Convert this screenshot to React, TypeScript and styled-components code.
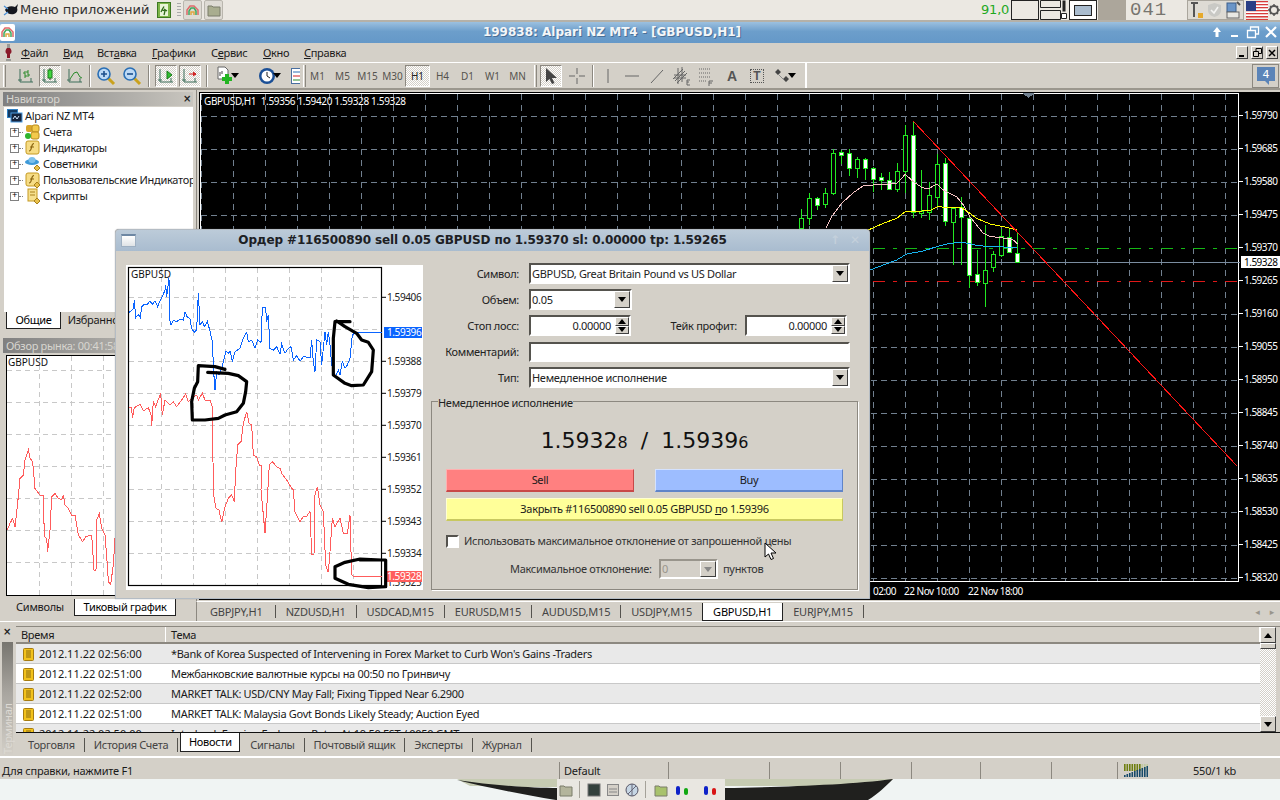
import React from "react";
import styled, { createGlobalStyle, css } from "styled-components";

const ui = `"Noto Sans", "DejaVu Sans", sans-serif`;

const GlobalStyle = createGlobalStyle`
  html, body { margin: 0; padding: 0; background: #d4d0c8; }
  * { box-sizing: border-box; }
  u { text-underline-offset: 1px; }
`;

/* ---------- shared looks ---------- */
const sunken = css`
  border: 2px solid;
  border-color: #55534e #fff #fff #55534e;
  background: #fff;
`;
const raised = css`
  border: 1px solid;
  border-color: #fff #404040 #404040 #fff;
  background: #d4d0c8;
`;

const Desktop = styled.div`
  position: relative;
  width: 1280px;
  height: 800px;
  overflow: hidden;
  display: flex;
  flex-direction: column;
  font: 11px/14px ${ui};
  letter-spacing: -0.3px;
  color: #1a1a1a;
  background: #d4d0c8;
`;

/* ---------- top panel ---------- */
const TopPanel = styled.div`
  height: 22px;
  flex: none;
  display: flex;
  align-items: center;
  background: #ebe8e2;
  border-bottom: 2px solid #b5b1a8;
  padding-left: 3px;
`;
const AppMenu = styled.span`
  font: 13px/20px "DejaVu Sans", sans-serif;
  letter-spacing: 0;
  margin-left: 1px;
  width: 137px;
  flex: none;
  white-space: nowrap;
  color: #333;
`;
const PanelTile = styled.span<{ $ml?: number }>`
  width: 19px;
  height: 20px;
  margin-left: ${p => p.$ml ?? 0}px;
  display: flex;
  align-items: center;
  justify-content: center;
  border: 1px solid #b9b6ae;
  border-radius: 2px;
  background: #dedbd4;
`;
const Grip = styled.span`
  width: 4px;
  height: 14px;
  margin: 0 2px 0 6px;
  background: repeating-linear-gradient(#aaa 0 1px, transparent 1px 3px);
`;
const PanelRight = styled.div`
  margin-left: auto;
  display: flex;
  align-items: center;
  height: 20px;
`;
const CpuText = styled.span`
  font: 13px/20px "DejaVu Sans", sans-serif;
  color: #1fa81f;
  letter-spacing: -0.2px;
  width: 30px;
  flex: none;
  white-space: nowrap;
`;
const Pager = styled.span<{ $active?: boolean; $fill?: boolean; $plain?: boolean }>`
  width: 28px;
  height: 20px;
  margin-right: 1px;
  flex: none;
  border: ${p => (p.$plain ? "0" : "1px solid #222")};
  background: ${p => (p.$fill ? "#aca69b" : p.$active ? "#fff" : "#ebe8e2")};
  ${p => p.$fill && "border-color:#aca69b;"}
  display: flex;
  align-items: center;
  justify-content: center;
`;
const ClockDigits = styled.span`
  font: 19px/20px "Liberation Mono", monospace;
  color: #77756f;
  width: 38px;
  margin-left: 3px;
  letter-spacing: 1px;
  flex: none;
`;
const Tray = styled.span`
  width: 57px;
  height: 20px;
  margin: 0 2px 0 19px;
  display: flex;
  align-items: center;
  gap: 3px;
  padding-left: 2px;
  border: 1px solid #aaa69d;
  background: #dedbd4;
`;

/* ---------- main window title ---------- */
const TitleBar = styled.div`
  height: 21px;
  flex: none;
  display: flex;
  align-items: center;
  justify-content: center;
  position: relative;
  padding-right: 56px;
  background: linear-gradient(#9cc0df, #6c9ecb 45%, #6598c8);
  color: #f4f6f8;
  font: bold 12px/21px "DejaVu Sans", sans-serif;
  letter-spacing: 0;
  text-shadow: 1px 1px 0 #4a6f96;
`;
const TitleIcon = styled.span`
  position: absolute;
  left: 0;
  top: 2px;
  width: 15px;
  height: 17px;
  background: #fff;
  border-radius: 2px;
  display: flex;
  align-items: center;
  justify-content: center;
`;
const TitleButtons = styled.span`
  position: absolute;
  right: 2px;
  top: 3px;
  display: flex;
  gap: 4px;
`;

/* ---------- menu ---------- */
const MenuBar = styled.div`
  height: 20px;
  flex: none;
  display: flex;
  align-items: center;
  padding-left: 2px;
  background: #d4d0c8;
  border-bottom: 1px solid #fff;
`;
const MenuItem = styled.span<{ $w: number }>`
  width: ${p => p.$w}px;
  flex: none;
`;
const MenuIcon = styled.svg`
  flex: none;
  margin-right: 2px;
`;
const MdiButtons = styled.span`
  margin-left: auto;
  margin-right: 2px;
  display: flex;
  gap: 3px;
`;
const MdiButton = styled.span`
  ${raised}
  width: 12px;
  height: 13px;
  display: flex;
  align-items: center;
  justify-content: center;
`;

/* ---------- tool bar ---------- */
const ToolBar = styled.div`
  height: 27px;
  flex: none;
  display: flex;
  align-items: center;
  background: #d4d0c8;
  border-bottom: 2px solid #9b978e;
  padding-left: 3px;
  position: relative;
  letter-spacing: 0;
`;
const ToolGrip = styled.span<{ $ml?: number }>`
  width: 3px;
  height: 22px;
  margin-left: ${p => p.$ml ?? 0}px;
  border-left: 1px solid #fff;
  border-right: 1px solid #8c8880;
`;
const ToolSep = styled.span<{ $ml: number }>`
  width: 2px;
  height: 22px;
  margin-left: ${p => p.$ml}px;
  border-left: 1px solid #8c8880;
  border-right: 1px solid #fff;
`;
const Tool = styled.span<{ $ml?: number; $w?: number; $on?: boolean }>`
  width: ${p => p.$w ?? 22}px;
  height: 22px;
  margin-left: ${p => p.$ml ?? 0}px;
  flex: none;
  display: flex;
  align-items: center;
  justify-content: center;
  color: #55534e;
  font-size: 10px;
  ${p =>
    p.$on &&
    css`
      background: repeating-conic-gradient(#fff 0 25%, #d4d0c8 0 50%) 0 0 / 2px 2px;
      border: 1px solid;
      border-color: #8c8880 #fff #fff #8c8880;
      color: #222;
    `}
`;
const ToolEnd = styled.span<{ $ml: number }>`
  width: 2px;
  height: 25px;
  margin-left: ${p => p.$ml}px;
  background: #fff;
`;
const NewsBadge = styled.span`
  position: absolute;
  right: 1px;
  top: 1px;
  width: 27px;
  height: 24px;
  border: 1px solid #8c8880;
  display: flex;
  align-items: center;
  justify-content: center;
`;

/* ---------- workspace ---------- */
const Workspace = styled.div`
  height: 531px;
  flex: none;
  display: flex;
`;
const LeftDock = styled.div`
  width: 197px;
  flex: none;
  display: flex;
  flex-direction: column;
  padding: 2px 0 0 3px;
  border-right: 1px solid #8c8880;
`;
const DockHeader = styled.div`
  height: 14px;
  margin-right: 3px;
  display: flex;
  align-items: center;
  justify-content: space-between;
  padding: 0 2px 0 3px;
  background: linear-gradient(90deg, #808080, #c9c6bf);
  color: #d8d6d0;
  font-size: 11px;
  white-space: nowrap;
`;
const Close = styled.span`
  font: bold 10px/12px "DejaVu Sans", sans-serif;
  color: #222;
`;
const Tree = styled.div`
  height: 205px;
  flex: none;
  margin: 1px 3px 0 1px;
  padding-top: 1px;
  background: #fff;
  overflow: hidden;
`;
const TreeRow = styled.div<{ $root?: boolean }>`
  height: 16px;
  display: flex;
  align-items: center;
  white-space: nowrap;
  padding-left: ${p => (p.$root ? 3 : 6)}px;
`;
const PlusBox = styled.span`
  width: 9px;
  height: 9px;
  flex: none;
  border: 1px solid #808080;
  font: 9px/7px "Liberation Mono", monospace;
  text-align: center;
  color: #000;
`;
const Dots = styled.span`
  width: 4px;
  border-top: 1px dotted #808080;
  flex: none;
`;
const TreeGlyph = styled.svg`
  flex: none;
  margin-left: 2px;
`;
const TreeText = styled.span`
  margin-left: 2px;
`;
const DockTabs = styled.div<{ $h: number }>`
  height: ${p => p.$h}px;
  flex: none;
  display: flex;
  padding-left: 3px;
  align-items: flex-start;
`;
const DockTab = styled.span<{ $w: number; $on?: boolean }>`
  width: ${p => p.$w}px;
  height: 17px;
  flex: none;
  text-align: center;
  line-height: 16px;
  white-space: nowrap;
  ${p =>
    p.$on &&
    css`
      background: #fff;
      border: 1px solid #222;
      border-top: 0;
      color: #000;
    `}
`;
const MarketHeader = styled(DockHeader)`
  margin-top: 6px;
  height: 15px;
  flex: none;
`;
const TickBox = styled.div`
  height: 243px;
  flex: none;
  margin: 1px 0 2px 3px;
  background: #d4d0c8;
  overflow: hidden;
`;
const ChartSvg = styled.svg`
  display: block;
  font-family: ${ui};
`;

const ChartColumn = styled.div`
  flex: 1;
  display: flex;
  flex-direction: column;
  padding: 2px 0 0 2px;
  min-width: 0;
`;
const ChartTabs = styled.div`
  height: 20px;
  margin: 1px 0 0 -3px;
  flex: none;
  display: flex;
  align-items: center;
  border-left: 1px solid #8c8880;
  border-top: 1px solid #fff;
  color: #444;
  letter-spacing: -0.2px;
  padding-left: 3px;
`;
const ChartTab = styled.span<{ $on?: boolean }>`
  height: 13px;
  line-height: 13px;
  padding: 0 10px;
  border-right: 1px solid #55534e;
  white-space: nowrap;
  &:first-child {
    padding-right: 12px;
  }
  ${p =>
    p.$on &&
    css`
      height: 18px;
      line-height: 17px;
      margin-left: -1px;
      background: #fff;
      color: #000;
      border: 1px solid #222;
      border-top: 0;
    `}
`;
const TabScroll = styled.span`
  margin-left: auto;
  margin-right: 6px;
  color: #99958c;
  font-size: 9px;
  word-spacing: 8px;
`;

/* ---------- terminal ---------- */
const Terminal = styled.div`
  height: 137px;
  flex: none;
  display: flex;
  border-top: 1px solid #fff;
  border-bottom: 2px solid #fff;
  padding-top: 4px;
`;
const TerminalStrip = styled.div`
  width: 16px;
  flex: none;
  display: flex;
  flex-direction: column;
  align-items: center;
  padding-right: 2px;
`;
const VerticalHead = styled.div`
  flex: 1;
  width: 11px;
  margin-top: 4px;
  background: linear-gradient(#d4d0c8, #a9a6a0 55%, #77756f);
  color: #dddad4;
  writing-mode: vertical-rl;
  transform: rotate(180deg);
  line-height: 11px;
  font-size: 11px;
  padding-top: 2px;
  white-space: nowrap;
`;
const TerminalMain = styled.div`
  flex: 1;
  display: flex;
  flex-direction: column;
  min-width: 0;
`;
const ListArea = styled.div`
  height: 107px;
  display: flex;
  border-bottom: 1px solid #111;
  border-top: 1px solid #8c8880;
  flex: none;
`;
const ListCols = styled.div`
  flex: 1;
  overflow: hidden;
`;
const ListHead = styled.div`
  display: flex;
  height: 17px;
  background: #d4d0c8;
  border-bottom: 2px solid #8c8880;
`;
const HeadCell = styled.span<{ $w?: number }>`
  ${p => (p.$w ? `width:${p.$w}px;` : "flex:1;")}
  padding-left: 5px;
  line-height: 15px;
  border-right: 1px solid #fff;
`;
const NewsRow = styled.div<{ $alt?: boolean }>`
  display: flex;
  height: 20px;
  align-items: center;
  padding-top: 1px;
  background: ${p => (p.$alt ? "#e9e9e9" : "#fff")};
  border-bottom: 1px solid #c8c8c8;
  white-space: nowrap;
`;
const NewsTime = styled.span`
  width: 150px;
  flex: none;
  display: flex;
  align-items: center;
  gap: 5px;
  padding-left: 7px;
  letter-spacing: 0;
`;
const NewsSubject = styled.span`
  padding-left: 5px;
`;
const NewsGlyph = styled.svg`
  flex: none;
`;
const ScrollBar = styled.div`
  width: 16px;
  margin-right: 4px;
  flex: none;
  display: flex;
  flex-direction: column;
  background: repeating-conic-gradient(#fff 0 25%, #d4d0c8 0 50%) 0 0 / 2px 2px;
`;
const ScrollBtn = styled.span<{ $h?: number }>`
  ${raised}
  height: ${p => p.$h ?? 16}px;
  flex: none;
  display: flex;
  align-items: center;
  justify-content: center;
`;
const ScrollGap = styled.span`
  flex: 1;
`;
const TermTabs = styled.div`
  height: 21px;
  display: flex;
  align-items: flex-start;
  padding: 3px 0 0 12px;
  color: #444;
`;
const TermTab = styled.span<{ $on?: boolean }>`
  height: 14px;
  line-height: 14px;
  padding: 0 9px 0 0;
  margin-right: 9px;
  margin-top: 2px;
  border-right: 1px solid #55534e;
  white-space: nowrap;
  ${p =>
    p.$on &&
    css`
      margin: -3px 10px 0 -7px;
      padding: 0;
      width: 60px;
      text-align: center;
      height: 19px;
      line-height: 17px;
      background: #fff;
      color: #000;
      border: 1px solid #222;
      border-top: 0;
    `}
`;

/* ---------- status bar ---------- */
const StatusBar = styled.div`
  height: 21px;
  flex: none;
  display: flex;
  align-items: flex-end;
  letter-spacing: -0.2px;
`;
const StatusCell = styled.span<{ $w: number; $pad?: number }>`
  width: ${p => p.$w}px;
  height: 17px;
  flex: none;
  line-height: 17px;
  padding-left: ${p => p.$pad ?? 4}px;
  border-right: 1px solid #8c8880;
  display: flex;
  align-items: center;
  gap: 45px;
  white-space: nowrap;
`;
const StatusPlain = styled(StatusCell)`
  border-right: 0;
`;

/* ---------- wallpaper + dock ---------- */
const Wallpaper = styled.div`
  height: 21px;
  flex: none;
  position: relative;
  background: #f0f4f3;
  padding-left: 557px;
`;
const WallArt = styled.svg`
  position: absolute;
  left: 0;
  top: 0;
`;
const Dock = styled.div`
  position: relative;
  width: 168px;
  height: 21px;
  display: flex;
  align-items: center;
  background: #e9e7e1;
`;
const DockIcon = styled.span<{ $ml: number }>`
  margin-left: ${p => p.$ml}px;
  display: flex;
`;
const DockSep = styled.span<{ $ml: number }>`
  width: 1px;
  height: 17px;
  margin-left: ${p => p.$ml}px;
  background: #a5a299;
`;

/* ---------- order dialog ---------- */
const Dialog = styled.div`
  position: absolute;
  left: 115px;
  top: 229px;
  width: 755px;
  height: 370px;
  background: #d4d0c8;
  border: 1px solid #b4bcc4;
  border-radius: 4px 4px 0 0;
  box-shadow: 0 0 1px #777;
`;
const DialogTitle = styled.div`
  height: 21px;
  position: relative;
  display: flex;
  align-items: center;
  justify-content: center;
  padding-right: 20px;
  background: linear-gradient(#bccbd9, #a9bccf);
  border-radius: 3px 3px 0 0;
  font: bold 12px/21px "DejaVu Sans", sans-serif;
  letter-spacing: -0.13px;
  color: #1c2024;
`;
const DialogIcon = styled.span`
  position: absolute;
  left: 5px;
  top: 4px;
  width: 15px;
  height: 13px;
  border: 1px solid #9eb0c2;
  border-top: 2px solid #6d87a3;
  background: linear-gradient(#fff, #dfe3e6);
`;
const DialogMarks = styled.span`
  position: absolute;
  right: 9px;
  top: 0;
  color: #c4d0db;
  font: bold 12px/21px "DejaVu Sans", sans-serif;
  word-spacing: 6px;
`;
const DialogBody = styled.div`
  display: flex;
  padding: 12px 0 0 10px;
`;
const TickChart = styled.div`
  width: 297px;
  height: 325px;
  margin-top: 2px;
  flex: none;
  background: #fff;
`;
const FormCol = styled.div`
  margin-left: 8px;
  width: 428px;
  flex: none;
  display: flex;
  flex-direction: column;
  gap: 5px;
`;
const FormRow = styled.div`
  height: 21px;
  display: flex;
  align-items: center;
`;
const FieldLabel = styled.label<{ $w?: number }>`
  width: ${p => p.$w ?? 98}px;
  padding-right: ${p => (p.$w ? 8 : 10)}px;
  text-align: right;
  flex: none;
  color: #222;
  white-space: nowrap;
`;
const Field = styled.div<{ $w: number; $h?: number; $off?: boolean }>`
  ${sunken}
  ${p => p.$off && "background:#d4d0c8;color:#99958c;border-color:#99958c #fff #fff #99958c;"}
  width: ${p => p.$w}px;
  height: ${p => p.$h ?? 21}px;
  flex: none;
  display: flex;
  align-items: center;
  justify-content: space-between;
  padding-left: 1px;
  color: ${p => (p.$off ? "#99958c" : "#222")};
`;
const FieldText = styled.span<{ $right?: boolean }>`
  flex: 1;
  text-align: ${p => (p.$right ? "right" : "left")};
  padding-right: ${p => (p.$right ? 4 : 0)}px;
  white-space: nowrap;
`;
const ComboBtn = styled.span`
  ${raised}
  width: 16px;
  height: 100%;
  flex: none;
  display: flex;
  align-items: center;
  justify-content: center;
`;
const Spin = styled.span`
  width: 14px;
  height: 100%;
  flex: none;
  display: flex;
  flex-direction: column;
`;
const SpinBtn = styled.span`
  ${raised}
  flex: 1;
  display: flex;
  align-items: center;
  justify-content: center;
`;
const Group = styled.fieldset`
  margin: -1px 0 0 0;
  padding: 0 14px;
  width: 427px;
  height: 198px;
  border: 1px solid #8c8880;
  box-shadow: 1px 1px 0 #fff;
  display: block;
`;
const GroupLegend = styled.legend`
  margin-left: -8px;
  padding: 4px 0 0 0;
  font-size: 11px;
  line-height: 14px;
  color: #222;
`;
const Quote = styled.div`
  height: 50px;
  margin-top: 9px;
  text-align: center;
  font: 22px/44px "DejaVu Sans", sans-serif;
  letter-spacing: 0;
  color: #111;
  word-spacing: 6px;
`;
const SmallDigit = styled.span`
  font-size: 16px;
`;
const ButtonRow = styled.div`
  display: flex;
  justify-content: space-between;
`;
const TradeButton = styled.button<{ $bg: string; $lo: string; $hi: string; $w?: number }>`
  width: ${p => p.$w ?? 188}px;
  height: 23px;
  padding: 0;
  font: 11px/20px ${ui};
  letter-spacing: -0.3px;
  color: #1a1a1a;
  background: ${p => p.$bg};
  border: 1px solid;
  border-color: ${p => p.$hi} ${p => p.$lo} ${p => p.$lo} ${p => p.$hi};
  border-bottom-width: 2px;
`;
const CloseWrap = styled.div`
  margin-top: 6px;
`;
const CheckRow = styled.div`
  margin-top: 13px;
  height: 14px;
  display: flex;
  align-items: center;
  gap: 5px;
  color: #333;
  white-space: nowrap;
`;
const CheckBox = styled.span`
  ${sunken}
  width: 13px;
  height: 13px;
  flex: none;
`;
const DeviationRow = styled.div`
  margin-top: 11px;
  height: 20px;
  padding-left: 64px;
  display: flex;
  align-items: center;
  color: #333;
`;
const DevLabel = styled.span`
  width: 149px;
  flex: none;
  white-space: nowrap;
`;
const DevUnit = styled.span`
  margin-left: 5px;
`;
const Cursor = styled.svg`
  position: absolute;
  left: 764px;
  top: 542px;
`;

/* ---------- data ---------- */
const prices = [
  ["1.59790", 116], ["1.59685", 149], ["1.59580", 182], ["1.59475", 215],
  ["1.59370", 248], ["1.59265", 281], ["1.59160", 314], ["1.59055", 347],
  ["1.58950", 380], ["1.58845", 413], ["1.58740", 446], ["1.58635", 479],
  ["1.58530", 512], ["1.58425", 545], ["1.58320", 578],
] as [string, number][];

// x, wick top, body top, body bottom, wick bottom, filled white
const candles: [number, number, number, number, number, boolean][] = [
  [4, 358, 385, 415, 420, false], [28, 310, 325, 385, 405, false], [52, 320, 325, 347, 360, true],
  [76, 295, 310, 343, 355, false], [100, 178, 190, 310, 315, false], [124, 180, 187, 197, 222, true],
  [148, 178, 190, 235, 258, true], [172, 200, 208, 235, 265, false], [196, 204, 208, 235, 270, true],
  [220, 232, 235, 268, 305, true], [244, 250, 262, 272, 300, true], [268, 245, 272, 298, 300, true],
  [292, 220, 245, 298, 305, false], [316, 105, 135, 245, 310, false], [340, 92, 135, 367, 385, true],
  [364, 240, 365, 370, 385, false], [388, 275, 317, 368, 390, false], [412, 192, 223, 322, 350, false],
  [436, 205, 220, 395, 408, true], [460, 352, 355, 398, 525, false], [484, 320, 352, 382, 525, true],
  [508, 385, 385, 557, 595, true], [532, 480, 553, 578, 588, true], [556, 405, 540, 580, 652, false],
  [580, 483, 493, 533, 545, false], [604, 418, 438, 495, 500, false], [628, 415, 442, 487, 490, true],
  [652, 428, 490, 517, 518, true],
];

const maPink = [78,415,95,380,125,340,160,308,190,287,220,285,250,283,290,280,316,253,340,275,365,292,385,297,410,282,430,300,470,320,490,345,510,380,530,405,550,430,570,440,600,442,640,450,652,462];
const maYellow = [205,420,250,400,290,385,316,365,390,362,412,350,440,352,485,353,510,370,530,385,570,402,610,410,650,420];
const maBlue = [210,540,250,525,290,510,320,492,370,483,410,470,450,460,490,457,530,466,570,470,652,472];

const askLine = [42,262,48,258,55,250,58,225,62,278,70,268,76,278,80,245,88,238,95,240,105,228,112,238,120,228,128,245,135,228,142,215,150,195,152,180,155,215,162,160,163,280,168,300,175,285,185,290,195,283,205,285,210,260,216,275,225,282,230,310,238,322,245,315,250,205,255,300,262,290,268,305,277,290,285,318,292,350,296,440,300,495,305,440,312,450,320,430,325,410,333,378,340,385,345,378,352,408,360,380,375,370,385,340,395,322,400,350,410,345,420,370,428,345,438,352,442,248,452,248,455,290,460,270,465,370,475,375,485,365,495,388,500,358,510,385,520,370,528,365,535,405,545,392,555,408,565,395,585,398,590,345,595,410,600,440,605,345,615,350,620,420,630,320,635,360,640,320,645,360,650,420,660,455,670,435,675,450,682,410,690,430,697,420,705,400,712,330,720,322,800,322];
const bidLine = [42,548,50,548,52,580,58,548,75,538,85,558,100,548,108,570,110,602,115,530,122,545,137,505,142,570,150,525,165,540,175,530,185,545,200,525,212,507,220,530,230,520,245,510,250,525,262,505,270,525,285,525,292,545,293,675,297,815,303,850,312,855,320,892,330,845,340,820,350,810,358,830,362,740,368,660,378,650,385,595,395,560,402,595,410,600,415,690,425,695,433,720,440,720,438,795,445,870,450,925,455,850,463,720,472,710,485,725,495,730,500,745,515,765,530,790,535,795,540,860,555,890,565,875,575,875,585,858,590,988,597,988,600,810,607,785,615,840,625,860,632,1020,640,1042,645,980,652,880,660,905,675,880,685,925,697,925,705,870,710,1050,715,1054,800,1054];
const scribbles = [
  [330,433,300,425,250,422,248,470,238,490,230,530,232,585,270,585,310,580,330,570,365,560,385,535,392,500,395,470,370,452,340,445,278,442],
  [705,290,660,290,655,340,655,450,690,475,710,482,745,480,770,440,775,375,760,352,740,345,725,325,690,305,665,288],
  [800,1005,735,1002,690,1012,660,1025,660,1060,700,1078,760,1088,812,1085,812,1005,735,1005],
];
const tickLabels = [["1.59406",297.3],["1.59388",361.3],["1.59379",393.3],["1.59370",425.3],["1.59361",457.3],["1.59352",489.3],["1.59343",521.3],["1.59334",553.3]] as [string,number][];
const miniLine = [22,585,30,565,38,550,45,575,52,515,60,430,70,420,75,375,85,345,90,370,98,380,105,460,120,480,130,480,133,605,140,610,143,650,150,585,155,485,165,475,175,490,185,495,190,480,195,510,205,520,215,540,225,540,235,600,248,620,258,605,275,600,282,705,288,705,290,555,298,535,305,580,315,600,322,690,325,740,332,748,340,690,345,610];

const news = [
  ["2012.11.22 02:56:00", "*Bank of Korea Suspected of Intervening in Forex Market to Curb Won's Gains -Traders"],
  ["2012.11.22 02:51:00", "Межбанковские валютные курсы на 00:50 по Гринвичу"],
  ["2012.11.22 02:52:00", "MARKET TALK: USD/CNY May Fall; Fixing Tipped Near 6.2900"],
  ["2012.11.22 02:51:00", "MARKET TALK: Malaysia Govt Bonds Likely Steady; Auction Eyed"],
  ["2012.11.22 02:50:00", "Interbank Foreign Exchange Rates At 19:50 EST / 0050 GMT"],
];

const toPoints = (pts: number[], ox: number, oy: number) => {
  const out: string[] = [];
  for (let i = 0; i < pts.length; i += 2) out.push(`${ox + pts[i] / 3},${oy + pts[i + 1] / 3}`);
  return out.join(" ");
};
const range = (from: number, to: number, step: number) => {
  const out: number[] = [];
  for (let v = from; v <= to; v += step) out.push(v);
  return out;
};

/* ---------- small drawings ---------- */
const Arrow = ({ up, color = "#000" }: { up?: boolean; color?: string }) => (
  <svg width="8" height="5" viewBox="0 0 8 5"><path d={up ? "M4 0 8 5H0z" : "M0 0h8L4 5z"} fill={color} /></svg>
);
const Caret = styled.span`
  margin-left: -5px;
  display: flex;
`;

const Axes = ({ c = "#3c6e5a" }: { c?: string }) => (
  <path d="M3 2v13h13M1 13h4M14 11v4" stroke={c} strokeWidth="1" fill="none" />
);
const BarsIcon = () => (
  <svg width="18" height="18" viewBox="0 0 18 18"><Axes /><path d="M8 4v7M8 6H6M8 9h2M11 3v7M11 5H9M11 8h2" stroke="#2a8a2a" fill="none" /></svg>
);
const CandleIcon = () => (
  <svg width="18" height="18" viewBox="0 0 18 18"><Axes /><path d="M9 1v12" stroke="#222" /><rect x="7" y="3" width="4" height="8" fill="#3fd53f" stroke="#1a7a1a" /></svg>
);
const LineIcon = () => (
  <svg width="18" height="18" viewBox="0 0 18 18"><Axes /><path d="M4 12 8 6l3-1 3 5 2 1" stroke="#2a8a2a" fill="none" /></svg>
);
const ZoomIcon = ({ plus }: { plus?: boolean }) => (
  <svg width="20" height="20" viewBox="0 0 20 20">
    <path d="M12 12l6 6" stroke="#caa21e" strokeWidth="3" />
    <circle cx="8" cy="8" r="6" fill="#bcd9f5" stroke="#2a6fb5" strokeWidth="1.6" />
    <path d={plus ? "M5 8h6M8 5v6" : "M5 8h6"} stroke="#1c4f8c" strokeWidth="1.6" />
  </svg>
);
const ShiftIcon = ({ red }: { red?: boolean }) => (
  <svg width="18" height="18" viewBox="0 0 18 18">
    <Axes />
    {red ? <path d="M8 7h7M12 5l3 2-3 2" stroke="#d02020" fill="#d02020" /> : <path d="M10 4l5 4-5 4z" fill="#2fbf2f" stroke="#1a7a1a" />}
  </svg>
);
const NewChartIcon = () => (
  <svg width="20" height="20" viewBox="0 0 20 20">
    <path d="M3 1h7l3 3v9H3z" fill="#fff" stroke="#666" />
    <path d="M5 6v4M7 5v3" stroke="#444" />
    <path d="M12 8v10M7 13h10" stroke="#23b523" strokeWidth="4" />
  </svg>
);
const ClockIcon = () => (
  <svg width="18" height="18" viewBox="0 0 18 18">
    <circle cx="9" cy="9" r="8" fill="#1b4f96" />
    <circle cx="9" cy="9" r="5.5" fill="#fff" />
    <path d="M9 5v4l3 2" stroke="#222" fill="none" />
  </svg>
);
const TemplateIcon = () => (
  <svg width="9" height="18" viewBox="0 0 9 18">
    <rect x="0.5" y="1.5" width="12" height="15" fill="#fff" stroke="#4a6fa0" />
    <path d="M2 5h7" stroke="#2a6fb5" /><path d="M2 9h7" stroke="#d02020" /><path d="M2 13h7" stroke="#2a8a2a" />
  </svg>
);
const PointerIcon = () => (
  <svg width="14" height="18" viewBox="0 0 14 18"><path d="M2 1v14l3.5-3 2.5 5 2.5-1-2.500-5H13z" fill="#444" /></svg>
);
const CrossIcon = () => (
  <svg width="18" height="18" viewBox="0 0 18 18"><path d="M9 1v6M9 11v6M1 9h6M11 9h6" stroke="#666" /></svg>
);
const StrokeIcon = ({ d }: { d: string }) => (
  <svg width="18" height="18" viewBox="0 0 18 18"><path d={d} stroke="#666" fill="none" /></svg>
);
const ChannelIcon = () => (
  <svg width="20" height="20" viewBox="0 0 20 20">
    <path d="M1 13 11 3M3 15 13 5M5 17 15 7M6 2v16M10 1v15M2 9h12M2 12h12" stroke="#666" fill="none" />
    <path d="M15 14h3M15 14v5h3M15 16h2" stroke="#666" fill="none" />
  </svg>
);
const FiboIcon = () => (
  <svg width="20" height="20" viewBox="0 0 20 20">
    <path d="M2 3h12M2 7h12M2 11h12M2 15h8" stroke="#666" strokeDasharray="1 1" fill="none" />
    <path d="M12 15h4M12 15v5M12 17h3" stroke="#666" fill="none" />
  </svg>
);
const MarksIcon = () => (
  <svg width="16" height="18" viewBox="0 0 16 18">
    <path d="M4 2l3 3-3 3-3-3zM12 9l3 3-3 3-3-3z" fill="#444" />
    <path d="M5 8l5 5" stroke="#888" />
  </svg>
);
const BoxedT = styled.span`
  width: 14px;
  height: 14px;
  border: 1px dotted #555;
  color: #555;
  font: bold 12px/12px "Liberation Sans", sans-serif;
  text-align: center;
`;
const BigA = styled.span`
  color: #555;
  font: bold 14px/16px "Liberation Sans", sans-serif;
`;
const AppGlyph = () => (
  <svg width="13" height="13" viewBox="0 0 13 13">
    <path d="M1 11V6l3-4h4l4 4v5" fill="none" stroke="#e06a6a" strokeWidth="1.5" />
    <path d="M3 11V7l2-3h3l2 3v4" fill="none" stroke="#3fa85f" strokeWidth="1.5" />
    <path d="M5 11V8h3v3" fill="none" stroke="#e0a83f" strokeWidth="1.5" />
  </svg>
);
const FolderGlyph = ({ c = "#a9ad8f" }: { c?: string }) => (
  <svg width="14" height="14" viewBox="0 0 14 14"><path d="M1 3h4l1 1h7v9H1z" fill={c} stroke="#7b7c6a" /></svg>
);
const MouseGlyph = () => (
  <svg width="16" height="16" viewBox="0 0 16 16">
    <path d="M2 8c1-3 6-5 10-3l3-3-1 4c1 2 0 5-3 6-3 1-7 0-9-4z" fill="#15171f" />
    <path d="M1 4l4 3M1 13l4-3" stroke="#4a90d8" strokeWidth="1.2" />
  </svg>
);
const ExitGlyph = () => (
  <svg width="14" height="16" viewBox="0 0 14 16">
    <rect x="0.500" y="0.500" width="13" height="15" fill="#7fb54a" stroke="#3d7a22" />
    <rect x="3" y="2" width="8" height="12" fill="#e9f5d8" />
    <path d="M7 4.500 5 8l3 1-1 4M5 8l-1 2M7 7l3 2" stroke="#2f6a1a" strokeWidth="1.3" fill="none" />
  </svg>
);
const FlagGlyph = () => (
  <svg width="22" height="20" viewBox="0 0 22 20">
    {range(0, 18, 3).map(y => <rect key={y} x="0" y={y + 1} width="22" height="1.500" fill="#d83c3c" />)}
    {range(2.5, 15, 3).map(y => <rect key={y} x="0" y={y} width="22" height="1.500" fill="#fff" />)}
    <rect x="0" y="1" width="10" height="10" fill="#2a3f86" />
  </svg>
);
const GearGlyph = () => (
  <svg width="12" height="14" viewBox="0 0 12 14">
    <circle cx="6" cy="7" r="4" fill="none" stroke="#555" strokeWidth="2" />
    <path d="M6 1v2M6 11v2M0 7h2M10 7h2M2 3l1 1M9 10l1 1M2 11l1-1M9 4l1-1" stroke="#555" strokeWidth="1.4" />
  </svg>
);
const TrayIcons = () => (
  <>
    <svg width="14" height="18" viewBox="0 0 14 18">
      <path d="M1 2h7M4 2v14" stroke="#555" strokeWidth="2" fill="none" />
      <rect x="8" y="12" width="5" height="5" fill="#e6a92a" />
    </svg>
    <svg width="15" height="16" viewBox="0 0 15 16">
      <path d="M7.500 1 14 3v5c0 4-3 6-6.500 7C4 14 1 12 1 8V3z" fill="#c9c9c5" />
      <path d="M4 8l3 3 4-6" stroke="#f4f4f2" strokeWidth="1.600" fill="none" />
    </svg>
    <svg width="16" height="18" viewBox="0 0 16 18">
      <rect x="2" y="2" width="9" height="9" fill="#6a95c8" stroke="#3c5f8a" />
      <rect x="2" y="11" width="12" height="6" fill="#e8e8e4" stroke="#666" />
      <path d="M12 1l3 3" stroke="#555" strokeWidth="2" />
    </svg>
  </>
);
const PagerStack = () => (
  <svg width="28" height="20" viewBox="0 0 28 20">
    <path d="M.5.500h20v7h-20zM.5 10.500h20v9h-20z" fill="#ebe8e2" stroke="#222" />
    <path d="M22.500.500h3v11h-3z" fill="#222" />
    <path d="M21.500 13.500h5v5h-5z" fill="#fff" stroke="#222" />
  </svg>
);
const RootIcon = () => (
  <svg width="16" height="14" viewBox="0 0 16 14">
    <rect x="0" y="0" width="11" height="9" fill="#2f7fc1" />
    <rect x="1" y="1" width="9" height="7" fill="#143a63" />
    <rect x="4" y="4" width="11" height="9" fill="#15233c" stroke="#4a9ae0" />
    <path d="M6 10l2-3 2 3 2-3" stroke="#cfe6ff" fill="none" />
  </svg>
);
const tile = "#f2c94c";
const TreeIcon = ({ kind }: { kind: string }) => (
  <TreeGlyph width="16" height="16" viewBox="0 0 16 16">
    {kind === "acc" && (
      <>
        <rect x="1" y="1" width="7" height="7" rx="2" fill="#d8a52c" />
        <rect x="7" y="1" width="7" height="7" rx="2" fill={tile} stroke="#b88a1c" />
        <rect x="6" y="8" width="8" height="7" rx="2" fill={tile} stroke="#b88a1c" />
        <circle cx="3" cy="12" r="3" fill="#2fb52f" />
      </>
    )}
    {(kind === "fn" || kind === "custom") && (
      <>
        <rect x="1" y="1" width="13" height="13" rx="2" fill="#f6dc85" stroke="#c59a22" />
        <path d="M9 3.500c-2 0-2 1.500-2.500 4S5.500 11 4 11M5 7h4" stroke="#8a6410" fill="none" strokeWidth="1.200" />
        {kind === "custom" && <path d="M12 10l3 3-3 3-3-3z" fill="#e8c04a" stroke="#a8801c" />}
      </>
    )}
    {kind === "ea" && (
      <>
        <ellipse cx="7" cy="6" rx="7" ry="3" fill="#3f9ad8" />
        <ellipse cx="7" cy="4" rx="3.500" ry="3" fill="#7cc0ec" />
        <path d="M12 9l3 3-3 3-3-3z" fill="#e8c04a" stroke="#a8801c" />
      </>
    )}
    {kind === "script" && (
      <>
        <rect x="3" y="1" width="9" height="12" fill="#f6e08e" stroke="#c59a22" />
        <path d="M5 4h5M5 7h5" stroke="#a8801c" />
        <path d="M12 10l3 3-3 3-3-3z" fill="#e8c04a" stroke="#a8801c" />
      </>
    )}
  </TreeGlyph>
);
const NewsIcon = () => (
  <NewsGlyph width="11" height="13" viewBox="0 0 11 13">
    <rect x="0.500" y="0.500" width="10" height="12" rx="1" fill="#f2c21c" stroke="#a67c10" />
    <path d="M3 3h5M3 5h5M3 7h5M3 9h5" stroke="#8a6a10" />
  </NewsGlyph>
);
const SignalIcon = () => (
  <svg width="24" height="13" viewBox="0 0 24 13">
    {range(0, 9, 1).map(i => (
      <React.Fragment key={i}>
        <rect x={i * 2.5} y="0" width="1.600" height="7" fill={i < 7 ? "#6f7f10" : "#c0c8a0"} />
        <rect x={i * 2.5} y={11 - i} width="1.600" height={2 + i} fill="#174a6a" />
      </React.Fragment>
    ))}
  </svg>
);
const Candles = ({ a, b }: { a: string; b: string }) => (
  <svg width="18" height="12" viewBox="0 0 18 12">
    <rect x="2" y="2" width="4" height="9" rx="2" fill={a} />
    <rect x="10" y="4" width="4" height="7" rx="2" fill={b} />
  </svg>
);

/* ---------- charts ---------- */
const MainChart = () => (
  <ChartSvg width="1081" height="508" viewBox="199 92 1081 508" shapeRendering="crispEdges">
    <rect x="199" y="92" width="1081" height="508" fill="#000" />
    <rect x="200.500" y="93.500" width="1038" height="488" fill="none" stroke="#fff" />
    {prices.filter(([, y]) => y !== 248 && y !== 281).map(([label, y]) => (
      <path key={label} d={`M201 ${y + 0.5}H1238`} stroke="#71808f" strokeDasharray="6 4" />
    ))}
    {range(201, 1238, 32).map(x => (
      <path key={x} d={`M${x + 0.5} 94V581`} stroke="#71808f" strokeDasharray="6 5" />
    ))}
    <path d="M1022 93h13l-6.500 5z" fill="#71808f" />
    <path d="M201 248.500H1238" stroke="#14b814" strokeDasharray="12 8 4 8" />
    <path d="M201 281.500H1238" stroke="#e01818" strokeDasharray="12 8 4 8" />
    <path d="M870 262.500H1240" stroke="#7b8da0" />
    {candles.map(([x, wt, bt, bb, wb, white]) => {
      const cx = Math.round(800 + x / 3) + 0.5;
      return (
        <g key={x}>
          <path d={`M${cx} ${90 + wt / 3}V${90 + wb / 3}`} stroke="#22e822" />
          <rect x={cx - 2} y={90 + bt / 3} width="4" height={(bb - bt) / 3} fill={white ? "#fff" : "#000"} stroke="#22e822" />
        </g>
      );
    })}
    <polyline points={toPoints(maPink, 800, 90)} fill="none" stroke="#f5c4c4" />
    <polyline points={toPoints(maYellow, 800, 90)} fill="none" stroke="#ffff00" />
    <polyline points={toPoints(maBlue, 800, 90)} fill="none" stroke="#18b4f0" />
    <path d="M913 121 1237 466" stroke="#ff1414" />
    <g fill="#fff" fontSize="10" shapeRendering="auto" letterSpacing="-0.500">
      <text x="204" y="105" xmlSpace="preserve" letterSpacing="-0.350">GBPUSD,H1  1.59356 1.59420 1.59328 1.59328</text>
      {prices.map(([label, y]) => (
        <g key={label}>
          <path d={`M1239 ${y - 0.5}h4`} stroke="#fff" />
          <text x="1244" y={y + 3}>{label}</text>
        </g>
      ))}
      <text x="873" y="595">02:00</text>
      <text x="904" y="595">22 Nov 10:00</text>
      <text x="968" y="595">22 Nov 18:00</text>
    </g>
    <rect x="1241" y="256" width="39" height="12" fill="#fff" />
    <text x="1244" y="266" fontSize="10" fill="#000" letterSpacing="-0.500">1.59328</text>
  </ChartSvg>
);

const GridLines = ({ xs, ys, x0, x1, y0, y1 }: { xs: number[]; ys: number[]; x0: number; x1: number; y0: number; y1: number }) => (
  <g stroke="#c8c8c8" strokeDasharray="5 4" shapeRendering="crispEdges">
    {xs.map(x => <path key={x} d={`M${x} ${y0}V${y1}`} />)}
    {ys.map(y => <path key={y} d={`M${x0} ${y}H${x1}`} />)}
  </g>
);

const DialogChart = () => (
  <ChartSvg width="297" height="325" viewBox="126 265 297 325" letterSpacing="-0.400">
    <GridLines xs={range(161.5, 354, 32)} ys={range(297.5, 554, 32)} x0={129} x1={381} y0={268} y1={585} />
    <rect x="128.500" y="267.500" width="253" height="318" fill="none" stroke="#000" strokeWidth="1.200" />
    <polyline points={toPoints(askLine, 115, 225)} fill="none" stroke="#0a64ff" shapeRendering="crispEdges" />
    <polyline points={toPoints(bidLine, 115, 225)} fill="none" stroke="#ff5c5c" shapeRendering="crispEdges" />
    {tickLabels.map(([label, y]) => (
      <g key={label}>
        <path d={`M382 ${y}h4`} stroke="#000" />
        <text x="387" y={y + 3.500} fontSize="10" fill="#222">{label}</text>
      </g>
    ))}
    <text x="387" y="586" fontSize="10" fill="#222">1.59325</text>
    <rect x="384" y="327" width="38" height="11" fill="#0a64ff" />
    <text x="387" y="336" fontSize="10" fill="#fff">1.59396</text>
    <rect x="385" y="571" width="37" height="11" fill="#ff5c5c" />
    <text x="387" y="580" fontSize="10" fill="#fff">1.59328</text>
    <text x="131" y="278" fontSize="10" fill="#111" letterSpacing="0">GBPUSD</text>
    {scribbles.map((pts, i) => (
      <polyline key={i} points={toPoints(pts, 115, 225)} fill="none" stroke="#000" strokeWidth="3.200" strokeLinejoin="round" strokeLinecap="round" />
    ))}
  </ChartSvg>
);

const MiniChart = () => (
  <ChartSvg width="191" height="243" viewBox="6 354 191 243">
    <rect x="6.500" y="355.500" width="190" height="240" fill="#fff" stroke="#000" />
    <GridLines xs={[39.5, 71.5, 103.5, 135.5, 167.5]} ys={range(370.5, 563, 32)} x0={7} x1={196} y0={356} y1={595} />
    <polyline points={toPoints(miniLine, 0, 335)} fill="none" stroke="#ff5c5c" shapeRendering="crispEdges" />
    <text x="8" y="366" fontSize="10" fill="#111" letterSpacing="0">GBPUSD</text>
  </ChartSvg>
);

/* ---------- App ---------- */
export default function App() {
  return (
    <Desktop>
      <GlobalStyle />
      <TopPanel>
        <MouseGlyph />
        <AppMenu>Меню приложений</AppMenu>
        <ExitGlyph />
        <Grip />
        <PanelTile><AppGlyph /></PanelTile>
        <PanelTile $ml={2}><FolderGlyph /></PanelTile>
        <PanelRight>
          <CpuText>91,0</CpuText>
          <Pager />
          <Pager $plain><PagerStack /></Pager>
          <Pager $active><svg width="18" height="11"><rect x="0.500" y="0.500" width="17" height="10" fill="#a9bccf" stroke="#222" /></svg></Pager>
          <Pager $fill />
          <ClockDigits>041</ClockDigits>
          <Tray><TrayIcons /></Tray>
          <FlagGlyph />
          <GearGlyph />
        </PanelRight>
      </TopPanel>

      <TitleBar>
        <TitleIcon><AppGlyph /></TitleIcon>
        199838: Alpari NZ MT4 - [GBPUSD,H1]
        <TitleButtons>
          <svg width="14" height="14"><path d="M7 2l4 5H8.500v5h-3V7H3z" fill="#fff" /></svg>
          <svg width="14" height="14"><path d="M3 11h7" stroke="#fff" strokeWidth="2" /></svg>
          <svg width="14" height="14"><path d="M1.500 5.500h8v7h-8zM4.500 5V2h8v7H10" stroke="#fff" strokeWidth="1.300" fill="none" /></svg>
          <svg width="14" height="14"><path d="M2 2l10 10M12 2 2 12" stroke="#fff" strokeWidth="2.200" /></svg>
        </TitleButtons>
      </TitleBar>

      <MenuBar>
        <MenuIcon width="17" height="19" viewBox="0 0 17 19">
          <path d="M5 1h3v4c2 2 2 5 0 6v4H5v-4C3 10 3 7 5 5z" fill="#8a1a2a" />
          <path d="M5 1h3v4H5zM4 16h5v2H4z" fill="#9a9a96" />
        </MenuIcon>
        <MenuItem $w={42}><u>Ф</u>айл</MenuItem>
        <MenuItem $w={34}><u>В</u>ид</MenuItem>
        <MenuItem $w={55}>Вст<u>а</u>вка</MenuItem>
        <MenuItem $w={59}><u>Г</u>рафики</MenuItem>
        <MenuItem $w={52}>С<u>е</u>рвис</MenuItem>
        <MenuItem $w={41}><u>О</u>кно</MenuItem>
        <MenuItem $w={60}><u>С</u>правка</MenuItem>
        <MdiButtons>
          <MdiButton><svg width="8" height="8"><path d="M1 7h5" stroke="#000" strokeWidth="2" /></svg></MdiButton>
          <MdiButton><svg width="9" height="9"><path d="M.5 3.500h5v5h-5zM3 3V.5h5.500v5H6" stroke="#000" fill="none" /></svg></MdiButton>
          <MdiButton><svg width="8" height="8"><path d="M1 1l6 6M7 1 1 7" stroke="#000" strokeWidth="1.500" /></svg></MdiButton>
        </MdiButtons>
      </MenuBar>

      <ToolBar>
        <ToolGrip />
        <Tool $ml={9}><BarsIcon /></Tool>
        <Tool $ml={2} $on><CandleIcon /></Tool>
        <Tool $ml={3}><LineIcon /></Tool>
        <ToolSep $ml={3} />
        <Tool $ml={4}><ZoomIcon plus /></Tool>
        <Tool $ml={4}><ZoomIcon /></Tool>
        <ToolSep $ml={5} />
        <Tool $ml={5} $on><ShiftIcon /></Tool>
        <Tool $ml={2} $on><ShiftIcon red /></Tool>
        <ToolSep $ml={5} />
        <Tool $ml={6}><NewChartIcon /></Tool>
        <Caret><Arrow /></Caret>
        <Tool $ml={17}><ClockIcon /></Tool>
        <Caret><Arrow /></Caret>
        <Tool $ml={9} $w={10}><TemplateIcon /></Tool>
        <ToolGrip $ml={3} />
        <Tool $ml={-1} $w={25}>M1</Tool>
        <Tool $w={25}>M5</Tool>
        <Tool $w={25}>M15</Tool>
        <Tool $w={25}>M30</Tool>
        <Tool $w={25} $on>H1</Tool>
        <Tool $w={25}>H4</Tool>
        <Tool $w={25}>D1</Tool>
        <Tool $w={25}>W1</Tool>
        <Tool $w={25}>MN</Tool>
        <ToolGrip $ml={4} />
        <Tool $ml={3} $on><PointerIcon /></Tool>
        <Tool $ml={4}><CrossIcon /></Tool>
        <ToolSep $ml={4} />
        <Tool $ml={3}><StrokeIcon d="M9 2v14" /></Tool>
        <Tool $ml={2}><StrokeIcon d="M2 9h14" /></Tool>
        <Tool $ml={3}><StrokeIcon d="M3 16 15 3" /></Tool>
        <Tool $ml={3}><ChannelIcon /></Tool>
        <Tool $ml={3}><FiboIcon /></Tool>
        <Tool $ml={3}><BigA>A</BigA></Tool>
        <Tool $ml={3}><BoxedT>T</BoxedT></Tool>
        <Tool $ml={3}><MarksIcon /></Tool>
        <Caret><Arrow /></Caret>
        <ToolEnd $ml={9} />
        <NewsBadge>
          <svg width="20" height="20" viewBox="0 0 20 20">
            <path d="M1 1h18v14h-6v4l-4-4H1z" fill="#5b84b8" />
            <text x="10" y="12" fontSize="11" fill="#fff" textAnchor="middle" fontFamily="DejaVu Sans">4</text>
          </svg>
        </NewsBadge>
      </ToolBar>

      <Workspace>
        <LeftDock>
          <DockHeader>Навигатор<Close>×</Close></DockHeader>
          <Tree>
            <TreeRow $root><RootIcon /><TreeText>Alpari NZ MT4</TreeText></TreeRow>
            <TreeRow><PlusBox>+</PlusBox><Dots /><TreeIcon kind="acc" /><TreeText>Счета</TreeText></TreeRow>
            <TreeRow><PlusBox>+</PlusBox><Dots /><TreeIcon kind="fn" /><TreeText>Индикаторы</TreeText></TreeRow>
            <TreeRow><PlusBox>+</PlusBox><Dots /><TreeIcon kind="ea" /><TreeText>Советники</TreeText></TreeRow>
            <TreeRow><PlusBox>+</PlusBox><Dots /><TreeIcon kind="custom" /><TreeText>Пользовательские Индикатор</TreeText></TreeRow>
            <TreeRow><PlusBox>+</PlusBox><Dots /><TreeIcon kind="script" /><TreeText>Скрипты</TreeText></TreeRow>
          </Tree>
          <DockTabs $h={20}>
            <DockTab $w={55} $on>Общие</DockTab>
            <DockTab $w={70}>Избранное</DockTab>
          </DockTabs>
          <MarketHeader>Обзор рынка: 00:41:58</MarketHeader>
          <TickBox><MiniChart /></TickBox>
          <DockTabs $h={17}>
            <DockTab $w={68}>Символы</DockTab>
            <DockTab $w={102} $on>Тиковый график</DockTab>
          </DockTabs>
        </LeftDock>
        <ChartColumn>
          <MainChart />
          <ChartTabs>
            <ChartTab>GBPJPY,H1</ChartTab>
            <ChartTab>NZDUSD,H1</ChartTab>
            <ChartTab>USDCAD,M15</ChartTab>
            <ChartTab>EURUSD,M15</ChartTab>
            <ChartTab>AUDUSD,M15</ChartTab>
            <ChartTab>USDJPY,M15</ChartTab>
            <ChartTab $on>GBPUSD,H1</ChartTab>
            <ChartTab>EURJPY,M15</ChartTab>
            <TabScroll>◂ ▸</TabScroll>
          </ChartTabs>
        </ChartColumn>
      </Workspace>

      <Terminal>
        <TerminalStrip>
          <Close>×</Close>
          <VerticalHead>Терминал</VerticalHead>
        </TerminalStrip>
        <TerminalMain>
          <ListArea>
            <ListCols>
              <ListHead>
                <HeadCell $w={150}>Время</HeadCell>
                <HeadCell>Тема</HeadCell>
              </ListHead>
              {news.map(([time, subject], i) => (
                <NewsRow key={i} $alt={i % 2 === 0}>
                  <NewsTime><NewsIcon />{time}</NewsTime>
                  <NewsSubject>{subject}</NewsSubject>
                </NewsRow>
              ))}
            </ListCols>
            <ScrollBar>
              <ScrollBtn><Arrow up /></ScrollBtn>
              <ScrollBtn $h={6} />
              <ScrollGap />
              <ScrollBtn><Arrow /></ScrollBtn>
            </ScrollBar>
          </ListArea>
          <TermTabs>
            <TermTab>Торговля</TermTab>
            <TermTab>История Счета</TermTab>
            <TermTab $on>Новости</TermTab>
            <TermTab>Сигналы</TermTab>
            <TermTab>Почтовый ящик</TermTab>
            <TermTab>Эксперты</TermTab>
            <TermTab>Журнал</TermTab>
          </TermTabs>
        </TerminalMain>
      </Terminal>

      <StatusBar>
        <StatusCell $w={560} $pad={2}>Для справки, нажмите F1</StatusCell>
        <StatusCell $w={109}>Default</StatusCell>
        <StatusCell $w={101} />
        <StatusCell $w={71} />
        <StatusCell $w={71} />
        <StatusCell $w={69} />
        <StatusCell $w={71} />
        <StatusCell $w={66} />
        <StatusPlain $w={162} $pad={6}><SignalIcon />550/1 kb</StatusPlain>
      </StatusBar>

      <Wallpaper>
        <WallArt width="1280" height="21" viewBox="0 0 1280 21">
          <path d="M457 0H893L885 7H470z" fill="#c6cbb2" />
          <path d="M480 0H558V8H520z" fill="#c6cbb2" />
          <path d="M457 1C490 6 530 9 558 9H725C780 8 850 6 893 0 885 8 878 15 868 21H556C520 15 485 8 457 1z" fill="#20201e" />
        </WallArt>
        <Dock>
          <DockIcon $ml={2}><FolderGlyph c="#b4b59c" /></DockIcon>
          <DockSep $ml={6} />
          <DockIcon $ml={7}><svg width="14" height="14"><rect x="1" y="1" width="12" height="12" fill="#33413c" stroke="#777" /></svg></DockIcon>
          <DockIcon $ml={6}><svg width="12" height="14"><rect x=".5" y="1.500" width="11" height="11" fill="#d4d0c8" stroke="#888" /><path d="M2 6h8M2 9h8" stroke="#888" /></svg></DockIcon>
          <DockIcon $ml={6}><svg width="14" height="14"><circle cx="7" cy="7" r="6" fill="#c6d6e4" stroke="#556" /><path d="M7 1v12M3 11l8-8" stroke="#667" /></svg></DockIcon>
          <DockSep $ml={6} />
          <DockIcon $ml={8}><FolderGlyph c="#a8c26c" /></DockIcon>
          <DockIcon $ml={6}><Candles a="#0f22c8" b="#11a811" /></DockIcon>
          <DockIcon $ml={10}><Candles a="#0f22c8" b="#d81414" /></DockIcon>
        </Dock>
      </Wallpaper>

      <Dialog>
        <DialogTitle>
          <DialogIcon />
          Ордер #116500890 sell 0.05 GBPUSD по 1.59370 sl: 0.00000 tp: 1.59265
          <DialogMarks>↑ ✕</DialogMarks>
        </DialogTitle>
        <DialogBody>
          <TickChart><DialogChart /></TickChart>
          <FormCol>
            <FormRow>
              <FieldLabel>Символ:</FieldLabel>
              <Field $w={321}><FieldText>GBPUSD, Great Britain Pound vs US Dollar</FieldText><ComboBtn><Arrow /></ComboBtn></Field>
            </FormRow>
            <FormRow>
              <FieldLabel>Объем:</FieldLabel>
              <Field $w={103}><FieldText>0.05</FieldText><ComboBtn><Arrow /></ComboBtn></Field>
            </FormRow>
            <FormRow>
              <FieldLabel>Стоп лосс:</FieldLabel>
              <Field $w={102}><FieldText $right>0.00000</FieldText><Spin><SpinBtn><Arrow up /></SpinBtn><SpinBtn><Arrow /></SpinBtn></Spin></Field>
              <FieldLabel $w={114}>Тейк профит:</FieldLabel>
              <Field $w={102}><FieldText $right>0.00000</FieldText><Spin><SpinBtn><Arrow up /></SpinBtn><SpinBtn><Arrow /></SpinBtn></Spin></Field>
            </FormRow>
            <FormRow>
              <FieldLabel>Комментарий:</FieldLabel>
              <Field $w={321} $h={20} />
            </FormRow>
            <FormRow>
              <FieldLabel>Тип:</FieldLabel>
              <Field $w={321}><FieldText>Немедленное исполнение</FieldText><ComboBtn><Arrow /></ComboBtn></Field>
            </FormRow>
            <Group>
              <GroupLegend>Немедленное исполнение</GroupLegend>
              <Quote>1.5932<SmallDigit>8</SmallDigit> / 1.5939<SmallDigit>6</SmallDigit></Quote>
              <ButtonRow>
                <TradeButton $bg="#ff8080" $hi="#ffb0b0" $lo="#c84848">Sell</TradeButton>
                <TradeButton $bg="#9dbdff" $hi="#d4e2ff" $lo="#5f84c8">Buy</TradeButton>
              </ButtonRow>
              <CloseWrap>
                <TradeButton $w={397} $bg="#ffff99" $hi="#ffffd0" $lo="#c8c860">Закрыть #116500890 sell 0.05 GBPUSD <u>п</u>о 1.59396</TradeButton>
              </CloseWrap>
              <CheckRow><CheckBox />Использовать максимальное отклонение от запрошенной цены</CheckRow>
              <DeviationRow>
                <DevLabel>Максимальное отклонение:</DevLabel>
                <Field $w={59} $h={20} $off><FieldText>0</FieldText><ComboBtn><Arrow color="#888" /></ComboBtn></Field>
                <DevUnit>пунктов</DevUnit>
              </DeviationRow>
            </Group>
          </FormCol>
        </DialogBody>
      </Dialog>

      <Cursor width="14" height="19" viewBox="0 0 14 19">
        <path d="M1 1v14l3.500-3 2.500 5.500 2.500-1L7 11h5z" fill="#fff" stroke="#000" />
      </Cursor>
    </Desktop>
  );
}
